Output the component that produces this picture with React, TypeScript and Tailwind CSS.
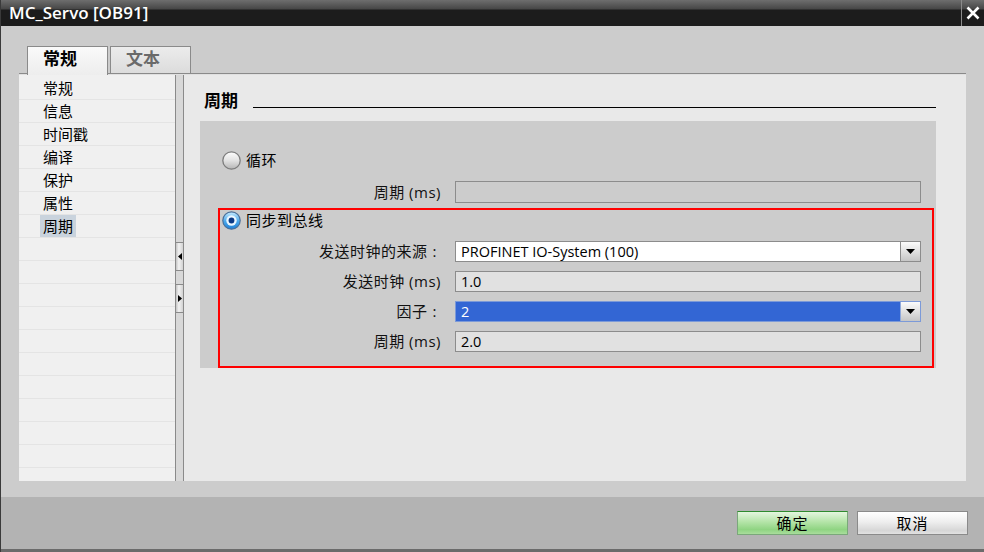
const cjk = "font-['Open_Sans','Noto_Sans_CJK_SC',sans-serif]";

const navItems = ["常规", "信息", "时间戳", "编译", "保护", "属性", "周期"];

function Radio({ checked }: { checked?: boolean }) {
  if (checked) {
    return (
      <svg width="19" height="19" viewBox="0 0 19 19" className="shrink-0" aria-hidden>
        <defs>
          <linearGradient id="rOn" x1="0" y1="0" x2="0" y2="1">
            <stop offset="0" stopColor="#c9ecff" />
            <stop offset="0.55" stopColor="#4aa8ec" />
            <stop offset="1" stopColor="#1f7fd6" />
          </linearGradient>
        </defs>
        <circle cx="9.5" cy="9.5" r="8.7" fill="url(#rOn)" stroke="#4b6f98" strokeWidth="1.2" />
        <circle cx="9.5" cy="9.5" r="5.2" fill="#eaf7ff" />
        <circle cx="9.5" cy="9.5" r="2.9" fill="#0b3a86" />
      </svg>
    );
  }
  return (
    <svg width="19" height="19" viewBox="0 0 19 19" className="shrink-0" aria-hidden>
      <defs>
        <linearGradient id="rOff" x1="0" y1="0" x2="0" y2="1">
          <stop offset="0" stopColor="#fdfdfd" />
          <stop offset="0.5" stopColor="#e2e2e2" />
          <stop offset="1" stopColor="#b5b5b5" />
        </linearGradient>
      </defs>
      <circle cx="9.5" cy="9.5" r="8.7" fill="url(#rOff)" stroke="#7c7c7c" strokeWidth="1.3" />
    </svg>
  );
}

function DropButton({ light }: { light?: boolean }) {
  return (
    <div
      className={
        "flex h-full w-[20px] shrink-0 items-center justify-center border-l bg-[linear-gradient(to_bottom,#fbfbfb,#dcdcdc_60%,#c6c6c6)] " +
        (light ? "border-[#8fa9dc]" : "border-[#8c8c8c]")
      }
    >
      <svg width="9" height="5" viewBox="0 0 9 5" aria-hidden>
        <path d="M0 0H9L4.5 5Z" fill="#000" />
      </svg>
    </div>
  );
}

function Colon() {
  return <span className="ml-[5px] mr-[4px]">:</span>;
}

function FieldRow({ label, children }: { label: React.ReactNode; children: React.ReactNode }) {
  return (
    <div className="flex h-[21px] items-center">
      <div className="w-[221px] shrink-0 text-right text-[15px] tracking-[0.5px] text-[#111]">{label}</div>
      <div className="ml-[14px] h-full w-[466px]">{children}</div>
    </div>
  );
}

function SplitterButton({ dir }: { dir: "left" | "right" }) {
  return (
    <div className="flex h-[29px] items-center border-y border-[#8a8a8a] bg-[linear-gradient(to_right,#c4c4c4,#f2f2f2_40%,#d2d2d2)] pl-[2px]">
      <svg width="4" height="7" viewBox="0 0 4 7" aria-hidden>
        {dir === "left" ? <path d="M4 0V7L0 3.5Z" fill="#000" /> : <path d="M0 0V7L4 3.5Z" fill="#000" />}
      </svg>
    </div>
  );
}

export default function App() {
  return (
    <div className={"flex h-[552px] w-[984px] flex-col overflow-hidden border-l border-[#3a3a3a] bg-[#cccccc] " + cjk}>
      {/* title bar */}
      <div className="flex h-[26px] shrink-0 bg-[linear-gradient(to_bottom,#6e6e6e_0px,#464646_9px,#1c1c1c_10px,#1c1c1c_100%)]">
        <div className="flex-1 pl-[8px] pt-[2px] font-['Open_Sans',sans-serif] text-[17px] font-semibold leading-[22px] text-white">
          MC_Servo [OB91]
        </div>
        <div className="flex w-[23px] items-center justify-center border-l border-[#8a8a8a]">
          <svg width="14" height="14" viewBox="0 0 14 14" aria-hidden>
            <path d="M1.5 1.5L12.5 12.5M12.5 1.5L1.5 12.5" stroke="#fff" strokeWidth="2.6" />
          </svg>
        </div>
      </div>

      {/* body */}
      <div className="flex min-h-0 flex-1 flex-col pb-[16px] pl-[18px] pr-[18px] pt-[20px]">
        {/* tabs */}
        <div className="flex h-[27px] shrink-0 items-end gap-[2px] pl-[8px]">
          <div className="relative z-10 -mb-[2px] h-[29px] w-[81px] border border-b-0 border-[#8a8a8a] bg-[linear-gradient(to_bottom,#fafafa,#ededed)] pl-[15px] pt-[1px] text-[17px] font-bold leading-[22px] text-black">
            常规
          </div>
          <div className="h-[27px] w-[81px] border border-b-0 border-[#8a8a8a] bg-[linear-gradient(to_bottom,#ececec,#dcdcdc)] pl-[15px] pt-[1px] text-[17px] font-bold leading-[22px] text-[#6a6a6a]">
            文本
          </div>
        </div>
        <div className="h-px shrink-0 bg-[#8a8a8a]" />
        <div className="h-px shrink-0 bg-[#e0e0e0]" />

        {/* content */}
        <div className="flex min-h-0 flex-1">
          {/* nav list */}
          <div className="w-[156px] shrink-0 overflow-hidden bg-[#f0f0f0] pt-[2px]">
            {Array.from({ length: 18 }).map((_, i) => {
              const item = navItems[i];
              const selected = item === "周期";
              return (
                <div key={i} className="flex h-[23px] items-center border-b border-[#e4e4e4] pl-[21px] text-[15px] text-black">
                  {item && (
                    <span className={"flex h-[22px] items-center px-[3px] " + (selected ? "bg-[#c9d3dd]" : "")}>{item}</span>
                  )}
                </div>
              );
            })}
          </div>

          {/* splitter */}
          <div className="flex w-[9px] shrink-0 flex-col gap-[13px] border-x border-[#8a8a8a] bg-[#d8d8d8] pt-[167px]">
            <SplitterButton dir="left" />
            <SplitterButton dir="right" />
          </div>

          {/* right panel */}
          <div className="flex flex-1 flex-col bg-[#e9e9e9] pl-[16px] pr-[30px] pt-[16px]">
            <div className="flex h-[20px] items-end pl-[4px]">
              <span className="text-[17px] font-bold leading-[20px] text-black">周期</span>
              <div className="mb-[3px] ml-[15px] h-[1.5px] flex-1 bg-black" />
            </div>

            <div className="mt-[10px] flex h-[247px] flex-col bg-[#cccccc] pl-[18px] pr-[2px] pt-[29px]">
              <div className="flex h-[20px] items-center gap-[5px] pl-[4px] text-[15px] tracking-[0.5px] text-black">
                <Radio />
                <span>循环</span>
              </div>
              <div className="mt-[11px] flex h-[22px] items-center">
                <div className="w-[223px] shrink-0 text-right text-[15px] tracking-[0.5px] text-[#111]">周期 (ms)</div>
                <div className="ml-[14px] h-full w-[466px] border border-[#8c8c8c] bg-[#cccccc]" />
              </div>

              <div className="mt-[5px] flex h-[160px] flex-col border-2 border-[#ff0000]">
                <div className="flex h-[20px] items-center gap-[5px] pl-[2px] text-[15px] tracking-[0.5px] text-black">
                  <Radio checked />
                  <span>同步到总线</span>
                </div>
                <div className="mt-[11px] flex flex-col gap-[9px]">
                  <FieldRow
                    label={
                      <>
                        发送时钟的来源
                        <Colon />
                      </>
                    }
                  >
                    <div className="flex h-full border border-[#8c8c8c] bg-white">
                      <div className="flex-1 pl-[5px] text-[14.5px] leading-[19px] text-black">PROFINET IO-System (100)</div>
                      <DropButton />
                    </div>
                  </FieldRow>
                  <FieldRow label="发送时钟 (ms)">
                    <div className="h-full border border-[#8c8c8c] bg-[#e1e1e1] pl-[5px] text-[14.5px] leading-[19px] text-black">
                      1.0
                    </div>
                  </FieldRow>
                  <FieldRow
                    label={
                      <>
                        因子
                        <Colon />
                      </>
                    }
                  >
                    <div className="flex h-full border border-[#7c9ad8] bg-[#3366d4]">
                      <div className="flex-1 pl-[5px] text-[14.5px] leading-[19px] text-white">2</div>
                      <DropButton light />
                    </div>
                  </FieldRow>
                  <FieldRow label="周期 (ms)">
                    <div className="h-full border border-[#8c8c8c] bg-[#e1e1e1] pl-[5px] text-[14.5px] leading-[19px] text-black">
                      2.0
                    </div>
                  </FieldRow>
                </div>
              </div>
            </div>
          </div>
        </div>
      </div>

      {/* footer */}
      <div className="flex h-[55px] shrink-0 items-center justify-end gap-[9px] border-b-[3px] border-[#6b6b6b] bg-[#b3b3b3] pr-[16px]">
        <button className="h-[24px] w-[111px] border border-[#7aa87a] border-t-[#2e8b2e] bg-[linear-gradient(to_bottom,#e4f6de,#b4e4a8_45%,#8fd482_80%,#a9dd9c)] text-[15px] tracking-[1px] text-black">
          确定
        </button>
        <button className="h-[24px] w-[111px] border border-[#8a8a8a] bg-[linear-gradient(to_bottom,#ffffff,#eeeeee_45%,#d6d6d6_85%,#e2e2e2)] text-[15px] tracking-[1px] text-black">
          取消
        </button>
      </div>
    </div>
  );
}
